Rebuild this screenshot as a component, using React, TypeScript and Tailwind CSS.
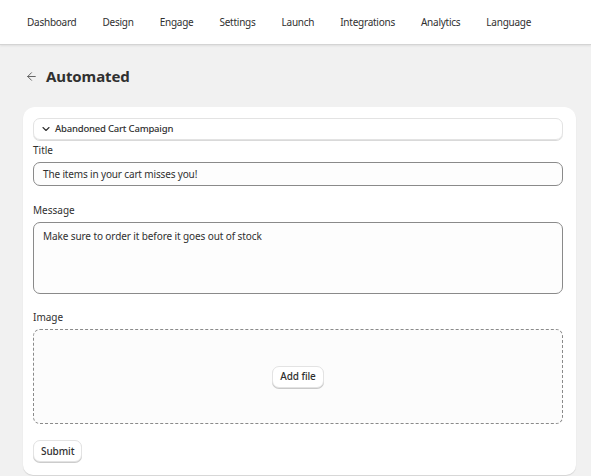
import { ChevronDown, ArrowLeft } from "lucide-react"

const navItems = ["Dashboard", "Design", "Engage", "Settings", "Launch", "Integrations", "Analytics", "Language"]

export default function App() {
  return (
    <div className="min-h-screen bg-[#f1f1f1] text-[#303030]" style={{ fontFamily: '"Noto Sans", "Open Sans", sans-serif' }}>
      {/* Top navigation */}
      <nav className="h-[45px] bg-white border-b border-[#d4d4d4] shadow-[0_1px_2px_rgba(0,0,0,0.08)] flex items-center pl-[27px] gap-[26px] pt-[1px]">
        {navItems.map((item) => (
          <a key={item} href="#" className="text-[10px] tracking-[-0.25px] text-[#303030]">
            {item}
          </a>
        ))}
      </nav>

      <div className="pl-[23px] pr-[15px]">
        {/* Page title */}
        <div className="flex items-center gap-[8px] h-[62px] pl-[2px]">
          <ArrowLeft size={13} strokeWidth={1.75} className="text-[#5c5c5c]" />
          <h1 className="text-[15px] font-bold tracking-[-0.1px] text-[#303030]">Automated</h1>
        </div>

        {/* Card */}
        <div className="bg-white rounded-t-[12px] rounded-b-[10px] shadow-[0_1px_1px_rgba(0,0,0,0.12)] pl-[10px] pr-[13px] pt-[11px] pb-[13px]">
          <button className="w-full h-[22px] flex items-center gap-[3px] px-[6px] border border-[#e3e3e3] rounded-[7px] shadow-[0_1px_0_rgba(0,0,0,0.15)] text-[9.5px] font-medium tracking-[-0.2px] text-[#303030]">
            <ChevronDown size={12} strokeWidth={2.25} />
            Abandoned Cart Campaign
          </button>

          <label className="block text-[10px] text-[#303030] mt-[3px] mb-[4px]">Title</label>
          <div className="h-[24px] flex items-center px-[9px] border border-[#8a8a8a] rounded-[7px] bg-[#fdfdfd] text-[10px] tracking-[-0.15px] text-[#303030]">
            The items in your cart misses you!
          </div>

          <label className="block text-[10px] text-[#303030] mt-[17px] mb-[4px]">Message</label>
          <div className="h-[72px] px-[9px] pt-[6px] border border-[#8a8a8a] rounded-[7px] bg-[#fdfdfd] text-[10px] tracking-[-0.1px] text-[#303030]">
            Make sure to order it before it goes out of stock
          </div>

          <label className="block text-[10px] text-[#303030] mt-[16px] mb-[4px]">Image</label>
          <div className="h-[95px] flex items-center justify-center border border-dashed border-[#8a8a8a] rounded-[7px] bg-[#fcfcfc]">
            <button className="h-[22px] px-[7px] rounded-[7px] bg-white border border-[#e3e3e3] shadow-[0_1px_0_rgba(0,0,0,0.2)] text-[10px] font-medium tracking-[-0.1px] text-[#303030]">
              Add file
            </button>
          </div>

          <button className="mt-[16px] h-[22px] px-[7px] rounded-[7px] bg-white border border-[#e3e3e3] shadow-[0_1px_0_rgba(0,0,0,0.2)] text-[10px] font-medium tracking-[-0.1px] text-[#303030]">
            Submit
          </button>
        </div>
      </div>
    </div>
  )
}
